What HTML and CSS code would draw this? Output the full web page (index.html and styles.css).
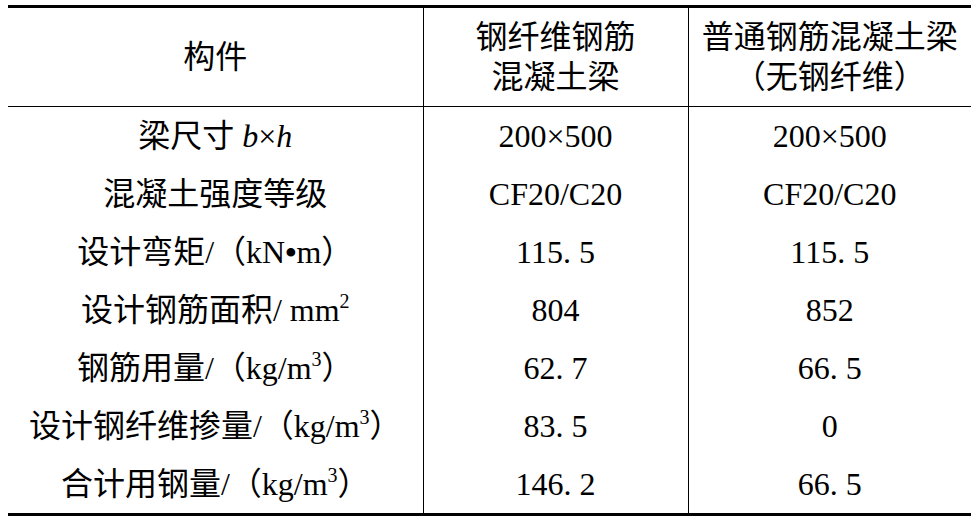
FILE: index.html
```html
<!DOCTYPE html>
<html lang="zh-CN">
<head>
    <meta charset="UTF-8">
    <meta name="viewport" content="width=device-width, initial-scale=1.0">
    <title>钢纤维钢筋混凝土梁用钢量对比</title>
    <link rel="stylesheet" href="styles.css">
</head>
<body>

<table class="compare">
    <colgroup>
        <col class="col-name">
        <col class="col-sf">
        <col class="col-rc">
    </colgroup>
    <thead>
        <tr>
            <th>构件</th>
            <th>钢纤维钢筋<br>混凝土梁</th>
            <th>普通钢筋混凝土梁<br>（无钢纤维）</th>
        </tr>
    </thead>
    <tbody>
        <tr>
            <td>梁尺寸 <i>b</i>×<i>h</i></td>
            <td>200×500</td>
            <td>200×500</td>
        </tr>
        <tr>
            <td>混凝土强度等级</td>
            <td>CF20/C20</td>
            <td>CF20/C20</td>
        </tr>
        <tr>
            <td>设计弯矩/（kN<b class="dot">•</b>m）</td>
            <td>115. 5</td>
            <td>115. 5</td>
        </tr>
        <tr>
            <td>设计钢筋面积/ mm<sup>2</sup></td>
            <td>804</td>
            <td>852</td>
        </tr>
        <tr>
            <td>钢筋用量/（kg/m<sup>3</sup>）</td>
            <td>62. 7</td>
            <td>66. 5</td>
        </tr>
        <tr>
            <td>设计钢纤维掺量/（kg/m<sup>3</sup>）</td>
            <td>83. 5</td>
            <td>0</td>
        </tr>
        <tr>
            <td>合计用钢量/（kg/m<sup>3</sup>）</td>
            <td>146. 2</td>
            <td>66. 5</td>
        </tr>
    </tbody>
</table>

</body>
</html>
```

FILE: styles.css
```css
body {
    margin: 5px 0 0 8px;
    font-family: "Liberation Serif", "Noto Sans CJK SC", serif;
    font-size: 32px;
    color: #000;
    background-color: #fff;
}
.compare {
    border-collapse: collapse;
    table-layout: fixed;
    width: 963px;
    border-top: 3px solid #000;
    border-bottom: 3px solid #000;
}
.col-name {
    width: 415px;
}
.col-sf {
    width: 265px;
}
.col-rc {
    width: 283px;
}
.compare th,
.compare td {
    padding: 0;
    text-align: center;
    vertical-align: middle;
    font-weight: normal;
}
.compare th + th,
.compare td + td {
    border-left: 1px solid #000;
}
.compare thead tr {
    border-bottom: 1px solid #000;
}
.compare th {
    height: 98px;
    line-height: 40px;
}
.compare td {
    height: 58px;
    line-height: 58px;
}
.compare sup {
    font-size: 20px;
    line-height: 0;
    vertical-align: 13px;
}
.dot {
    font-weight: bold;
}
```
